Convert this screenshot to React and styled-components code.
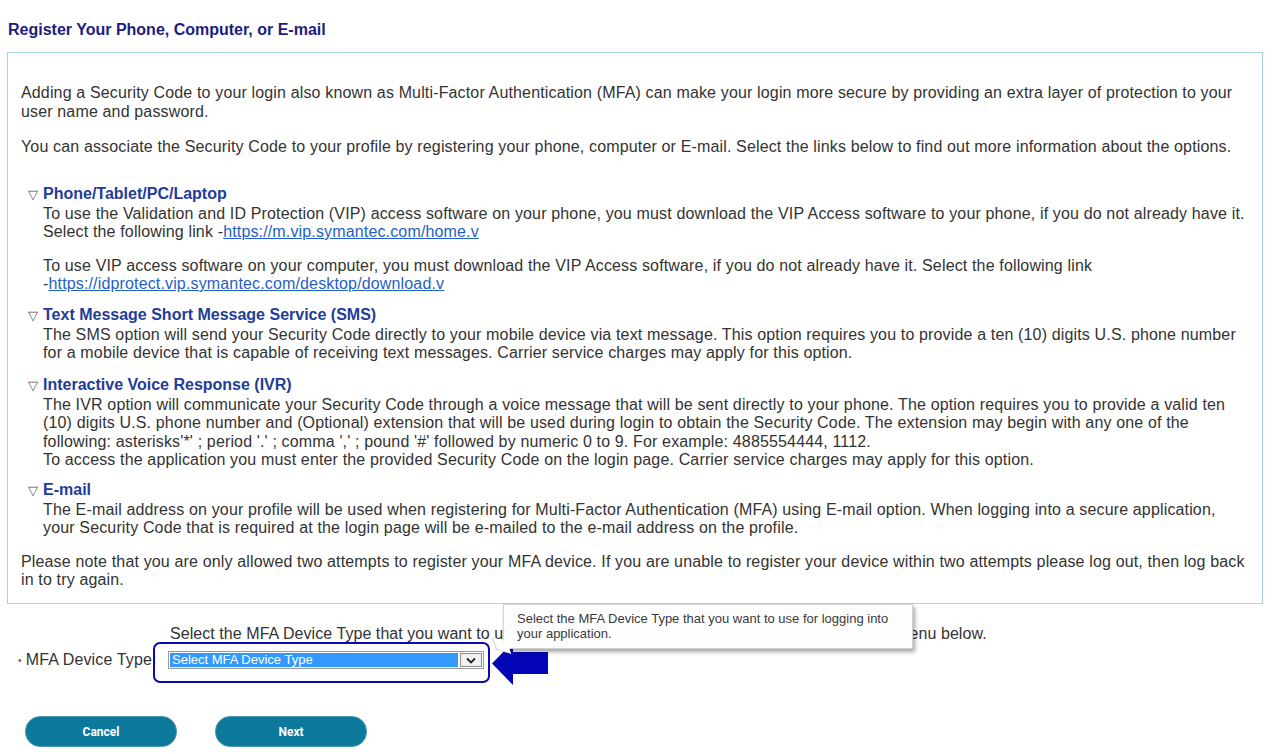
import React from "react";
import styled, { createGlobalStyle } from "styled-components";

const GlobalStyle = createGlobalStyle`
  body {
    margin: 0;
    background: #ffffff;
    font-family: "Liberation Sans", Arial, sans-serif;
    color: #333333;
  }
`;

const Page = styled.div`
  width: 1282px;
  padding-top: 21px;
`;

const Title = styled.h1`
  margin: 0 0 13px 8px;
  font-size: 16px;
  line-height: 18px;
  font-weight: bold;
  color: #1d1d7e;
`;

const InfoBox = styled.div`
  margin-left: 7px;
  width: 1256px;
  box-sizing: border-box;
  border: 1px solid #a9d3e4;
  padding: 31px 8px 13px 13px;
  font-size: 16px;
  line-height: 18.5px;
  letter-spacing: 0.15px;
`;

const Para = styled.p`
  margin: ${(p) => p.$top || 0}px 0 0 0;
`;

const Section = styled.div`
  margin: ${(p) => p.$top || 11}px 0 0 22px;
`;

const Heading = styled.div`
  position: relative;
  font-weight: bold;
  color: #1f3c98;
  line-height: 20px;
  letter-spacing: 0;

  &::before {
    content: "▽";
    position: absolute;
    left: -15px;
    top: 1px;
    font-weight: normal;
    font-size: 13px;
    color: #555;
  }
`;

const Link = styled.a`
  color: #1f5fc6;
  text-decoration: underline;
`;

const FormArea = styled.div`
  position: relative;
  padding-top: 21px;
`;

const Instruction = styled.p`
  margin: 0 0 0 170px;
  font-size: 16px;
  line-height: 18.5px;
  letter-spacing: 0.06px;
`;

const FieldRow = styled.div`
  position: relative;
  display: flex;
  align-items: center;
  margin-top: 7px;
  height: 20px;
  font-size: 16px;
  letter-spacing: 0.15px;
`;

const Label = styled.label`
  width: 150px;
  padding-left: 18px;
  white-space: nowrap;
  display: flex;
  align-items: center;
  gap: 4px;

  &::before {
    content: "•";
    font-size: 10px;
    color: #666;
  }
`;

const SelectBox = styled.div`
  position: relative;
  display: flex;
  align-items: center;
  width: 316px;
  height: 18px;
  box-sizing: border-box;
  border: 1px solid #9a9a9a;
  padding: 1px;
  background: #fff;
`;

const SelectValue = styled.span`
  flex: 1;
  height: 100%;
  background: #3399ff;
  color: #ffffff;
  font-size: 13px;
  line-height: 14px;
  letter-spacing: 0;
  padding-left: 2px;
`;

const SelectArrow = styled.span`
  width: 22px;
  height: 14px;
  margin-left: 2px;
  box-sizing: border-box;
  border: 1px solid #8c8c8c;
  background: #f1f1f1;
  display: flex;
  align-items: center;
  justify-content: center;
`;

const Highlight = styled.div`
  position: absolute;
  left: 153px;
  top: -8px;
  width: 337px;
  height: 41px;
  box-sizing: border-box;
  border: 2.5px solid #0a0ab0;
  border-radius: 7px;
  pointer-events: none;
`;

const ArrowMark = styled.svg`
  position: absolute;
  left: 491px;
  top: -8px;
`;

const Tooltip = styled.div`
  position: absolute;
  left: 503px;
  top: 0;
  width: 410px;
  height: 45px;
  box-sizing: border-box;
  padding: 6px 13px;
  background: #fefefe;
  border: 1px solid #d2d2d2;
  box-shadow: 2px 3px 4px rgba(0, 0, 0, 0.35);
  font-size: 13px;
  line-height: 15px;
  color: #3a3a3a;

  &::after {
    content: "";
    position: absolute;
    left: -9px;
    bottom: -4px;
    width: 12px;
    height: 12px;
    background: #fefefe;
    border-left: 1px solid #d2d2d2;
    border-bottom: 1px solid #d2d2d2;
    transform: skewX(35deg) rotate(20deg);
  }
`;

const Buttons = styled.div`
  display: flex;
  gap: 38px;
  margin: 46px 0 0 25px;
`;

const Button = styled.button`
  width: 152px;
  height: 31px;
  border: 1px solid #4d9ab5;
  border-radius: 15px;
  background: #0b789c;
  color: #ffffff;
  font-family: Roboto, "Liberation Sans", Arial, sans-serif;
  font-weight: bold;
  font-size: 12px;
  cursor: pointer;
`;

const App = () => (
  <Page>
    <GlobalStyle />
    <Title>Register Your Phone, Computer, or E-mail</Title>
    <InfoBox>
      <Para>
        Adding a Security Code to your login also known as Multi-Factor Authentication (MFA) can make your login more secure by providing an extra layer of protection to your
        <br />
        user name and password.
      </Para>
      <Para $top={17}>
        You can associate the Security Code to your profile by registering your phone, computer or E-mail. Select the links below to find out more information about the options.
      </Para>

      <Section $top={27}>
        <Heading>Phone/Tablet/PC/Laptop</Heading>
        <Para $top={1}>
          To use the Validation and ID Protection (VIP) access software on your phone, you must download the VIP Access software to your phone, if you do not already have it.
          <br />
          Select the following link -<Link href="#">https://m.vip.symantec.com/home.v</Link>
        </Para>
        <Para $top={15}>
          To use VIP access software on your computer, you must download the VIP Access software, if you do not already have it. Select the following link
          <br />
          -<Link href="#">https://idprotect.vip.symantec.com/desktop/download.v</Link>
        </Para>
      </Section>

      <Section>
        <Heading>Text Message Short Message Service (SMS)</Heading>
        <Para $top={1}>
          The SMS option will send your Security Code directly to your mobile device via text message. This option requires you to provide a ten (10) digits U.S. phone number
          <br />
          for a mobile device that is capable of receiving text messages. Carrier service charges may apply for this option.
        </Para>
      </Section>

      <Section $top={12}>
        <Heading>Interactive Voice Response (IVR)</Heading>
        <Para $top={1}>
          The IVR option will communicate your Security Code through a voice message that will be sent directly to your phone. The option requires you to provide a valid ten
          <br />
          (10) digits U.S. phone number and (Optional) extension that will be used during login to obtain the Security Code. The extension may begin with any one of the
          <br />
          following: asterisks'*' ; period '.' ; comma ',' ; pound '#' followed by numeric 0 to 9. For example: 4885554444, 1112.
          <br />
          To access the application you must enter the provided Security Code on the login page. Carrier service charges may apply for this option.
        </Para>
      </Section>

      <Section $top={10}>
        <Heading>E-mail</Heading>
        <Para $top={1}>
          The E-mail address on your profile will be used when registering for Multi-Factor Authentication (MFA) using E-mail option. When logging into a secure application,
          <br />
          your Security Code that is required at the login page will be e-mailed to the e-mail address on the profile.
        </Para>
      </Section>

      <Para $top={15}>
        Please note that you are only allowed two attempts to register your MFA device. If you are unable to register your device within two attempts please log out, then log back
        <br />
        in to try again.
      </Para>
    </InfoBox>

    <FormArea>
      <Instruction>
        Select the MFA Device Type that you want to use for logging into your application from the drop down menu below.
      </Instruction>
      <FieldRow>
        <Label>MFA Device Type:</Label>
        <SelectBox>
          <SelectValue>Select MFA Device Type</SelectValue>
          <SelectArrow>
            <svg width="10" height="7" viewBox="0 0 10 7">
              <path d="M1 1.5 L5 5.5 L9 1.5" fill="none" stroke="#222" strokeWidth="1.8" />
            </svg>
          </SelectArrow>
        </SelectBox>
        <Highlight />
        <ArrowMark width="58" height="43" viewBox="0 0 58 43">
          <polygon points="1,21.5 22,0 22,10 57,10 57,32 22,32 22,43" fill="#0505b8" />
        </ArrowMark>
      </FieldRow>
      <Tooltip>
        Select the MFA Device Type that you want to use for logging into
        <br />
        your application.
      </Tooltip>
      <Buttons>
        <Button>Cancel</Button>
        <Button>Next</Button>
      </Buttons>
    </FormArea>
  </Page>
);

export default App;
